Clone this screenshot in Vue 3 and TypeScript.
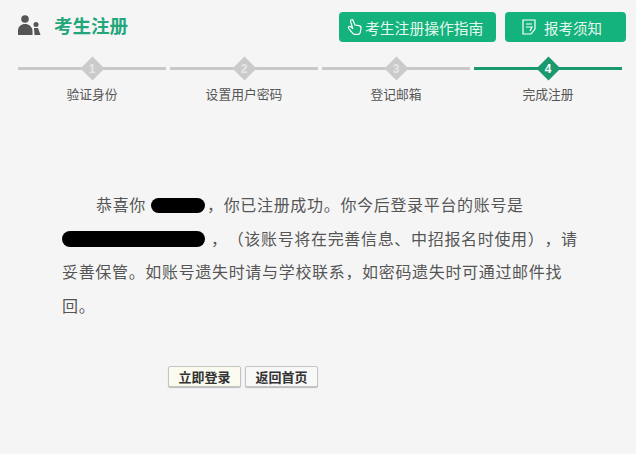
<template>
  <div class="page">
    <header class="top">
      <div class="title">
        <svg class="user-icon" width="24" height="22" viewBox="0 0 24 22">
          <circle cx="7" cy="4" r="3.800" fill="#555" />
          <path d="M0 20v-4.500C0 11.500 3.200 9 7 9s7 2.500 7.500 6.500V20z" fill="#555" />
          <circle cx="18" cy="9.500" r="2.500" fill="#555" />
          <path d="M16 13h4l2.500 7h-6z" fill="#555" />
        </svg>
        <h1>考生注册</h1>
      </div>
      <div class="actions">
        <a class="btn guide">
          <svg width="18" height="20" viewBox="0 0 18 20" fill="none" stroke="#fff" stroke-width="1.200" stroke-linejoin="round" stroke-linecap="round">
            <path d="M4.500 4.200a1.400 1.400 0 0 1 2.600-.8L9 8l4 .6c1.500.3 2.200 1.200 2 2.600l-.8 4.500c-.2 1-.9 1.600-1.900 1.600H8.500c-.8 0-1.300-.3-1.700-1l-4.300-5c-.7-1.300 1-2.600 2.200-1.500l2 1.700z" />
          </svg>
          <span>考生注册操作指南</span>
        </a>
        <a class="btn notice">
          <svg width="16" height="18" viewBox="0 0 16 18" fill="none" stroke="#fff" stroke-width="1.200">
            <path d="M2 2h12v9l-4 5H2z" />
            <path d="M5 6h6M5 9h6l-2 4" />
          </svg>
          <span>报考须知</span>
        </a>
      </div>
    </header>

    <ol class="steps">
      <li v-for="(step, i) in steps" :key="step" class="step" :class="{ active: i === current }">
        <div class="track">
          <span class="diamond"><b>{{ i + 1 }}</b></span>
        </div>
        <span class="label">{{ step }}</span>
      </li>
    </ol>

    <section class="message">
      <p>
        恭喜你<span class="mask name"></span>，你已注册成功。你今后登录平台的账号是<span class="mask account"></span>，（该账号将在完善信息、中招报名时使用），请妥善保管。如账号遗失时请与学校联系，如密码遗失时可通过邮件找回。
      </p>
    </section>

    <div class="buttons">
      <button class="plain login">立即登录</button>
      <button class="plain">返回首页</button>
    </div>
  </div>
</template>

<script setup lang="ts">
const steps: string[] = ['验证身份', '设置用户密码', '登记邮箱', '完成注册']
const current = 3
</script>

<style>
html,
body {
  margin: 0;
  background: #f5f5f5;
}
</style>

<style scoped>
.page {
  box-sizing: border-box;
  width: 636px;
  height: 454px;
  overflow: hidden;
  padding: 12px 10px 0 18px;
  background: #f5f5f5;
  font-family: "Liberation Sans", "Noto Sans CJK SC", sans-serif;
  color: #444;
}
.top {
  display: flex;
  justify-content: space-between;
  align-items: center;
  height: 30px;
}
.title {
  display: flex;
  align-items: center;
  gap: 12px;
}
.title h1 {
  margin: 0;
  font-size: 18.500px;
  line-height: 30px;
  font-weight: 700;
  color: #22a67a;
}
.user-icon {
  margin-top: -2px;
}
.actions {
  display: flex;
  gap: 9px;
}
.btn {
  display: flex;
  align-items: center;
  height: 30px;
  border-radius: 4px;
  background: #14b27c;
  color: #e6f7f0;
}
.guide {
  width: 157px;
  padding-left: 7px;
  gap: 1px;
  box-sizing: border-box;
  font-size: 14.800px;
}
.notice {
  width: 121px;
  padding-left: 16px;
  gap: 7px;
  box-sizing: border-box;
  font-size: 14.500px;
}
.steps {
  display: flex;
  gap: 4px;
  margin: 14px 4px 0 0;
  padding: 0;
  list-style: none;
}
.step {
  display: flex;
  flex-direction: column;
  align-items: center;
  width: 148px;
}
.track {
  display: flex;
  justify-content: center;
  align-items: center;
  width: 100%;
  height: 3px;
  margin-top: 11px;
  background: #c8c8c8;
}
.diamond {
  display: flex;
  align-items: center;
  justify-content: center;
  width: 17px;
  height: 17px;
  flex: none;
  background: #cbcbcb;
  transform: rotate(45deg);
}
.diamond b {
  transform: rotate(-45deg);
  font-size: 12px;
  font-weight: 700;
  color: #e6e6e6;
}
.label {
  margin-top: 17px;
  font-size: 12.800px;
  line-height: 16px;
  color: #555;
}
.active .track {
  background: #1a9a6c;
}
.active .diamond {
  background: #1a9a6c;
}
.active .diamond b {
  color: #fff;
}
.message {
  width: 516px;
  margin: 86px 0 0 44px;
}
.message p {
  margin: 0;
  font-size: 16px;
  letter-spacing: 0.670px;
  line-height: 33.700px;
  text-indent: 34px;
  text-spacing-trim: space-all;
  color: #555;
}
.mask {
  display: inline-block;
  height: 15px;
  vertical-align: -2px;
  background: #000;
  border-radius: 8px;
}
.name {
  width: 54px;
  margin: 0 2px 0 5px;
}
.account {
  width: 143px;
  height: 16px;
  margin-right: 6px;
}
.buttons {
  display: flex;
  gap: 4px;
  margin: 42px 0 0 150px;
}
.plain {
  width: 73px;
  height: 21px;
  padding: 0;
  border: 1px solid #c4c4c4;
  border-radius: 2px;
  background: #f8f8f8;
  box-shadow: 0 1px 1px #bbb;
  font-family: inherit;
  font-size: 13px;
  font-weight: 700;
  color: #333;
}
.login {
  background: #fafaee;
}
</style>
